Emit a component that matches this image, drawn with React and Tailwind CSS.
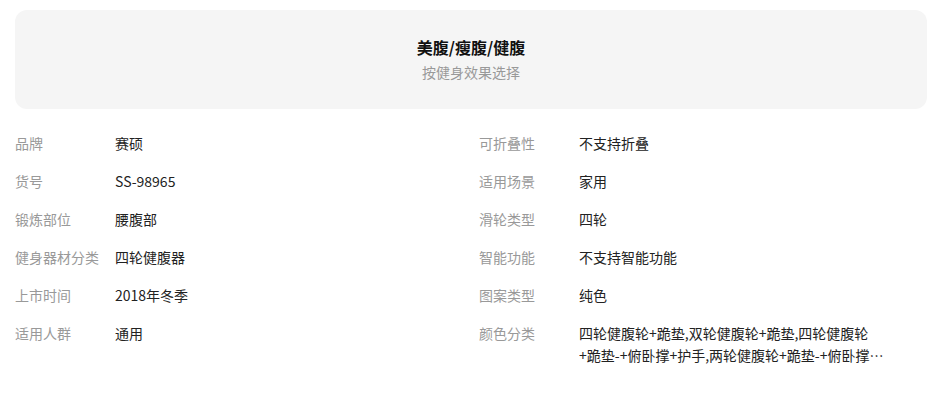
import React from 'react';

const font = { fontFamily: '"Microsoft YaHei", "Noto Sans CJK SC", "Liberation Sans", sans-serif' };

const leftRows = [
  ['品牌', '赛硕'],
  ['货号', 'SS-98965'],
  ['锻炼部位', '腰腹部'],
  ['健身器材分类', '四轮健腹器'],
  ['上市时间', '2018年冬季'],
  ['适用人群', '通用'],
];

const rightRows = [
  ['可折叠性', '不支持折叠'],
  ['适用场景', '家用'],
  ['滑轮类型', '四轮'],
  ['智能功能', '不支持智能功能'],
  ['图案类型', '纯色'],
  ['颜色分类', '四轮健腹轮+跪垫,双轮健腹轮+跪垫,四轮健腹轮+跪垫-+俯卧撑+护手,两轮健腹轮+跪垫-+俯卧撑+护手'],
];

const Row = ({ label, value }) => (
  <div className="flex items-start text-[14px] leading-[22px]">
    <div className="w-[100px] shrink-0 text-[#999]">{label}</div>
    <div className="w-[306px] text-[#222] line-clamp-2">{value}</div>
  </div>
);

const App = () => {
  return (
    <div className="w-[944px] h-[395px] bg-white pl-[15px] pr-[17px] pt-[10px]" style={font}>
      <div className="bg-[#f5f5f5] rounded-[12px] h-[99px] flex flex-col items-center pt-[25px]">
        <h2 className="text-[16px] leading-[24px] font-bold text-[#111]">美腹/瘦腹/健腹</h2>
        <p className="mt-[3px] text-[14px] leading-[20px] text-[#999]">按健身效果选择</p>
      </div>

      <div className="grid grid-cols-[464px_1fr] mt-[23px]">
        <div className="flex flex-col gap-[16px]">
          {leftRows.map(([l, v]) => (
            <Row key={l} label={l} value={v} />
          ))}
        </div>
        <div className="flex flex-col gap-[16px]">
          {rightRows.map(([l, v]) => (
            <Row key={l} label={l} value={v} />
          ))}
        </div>
      </div>
    </div>
  );
};

export default App;
